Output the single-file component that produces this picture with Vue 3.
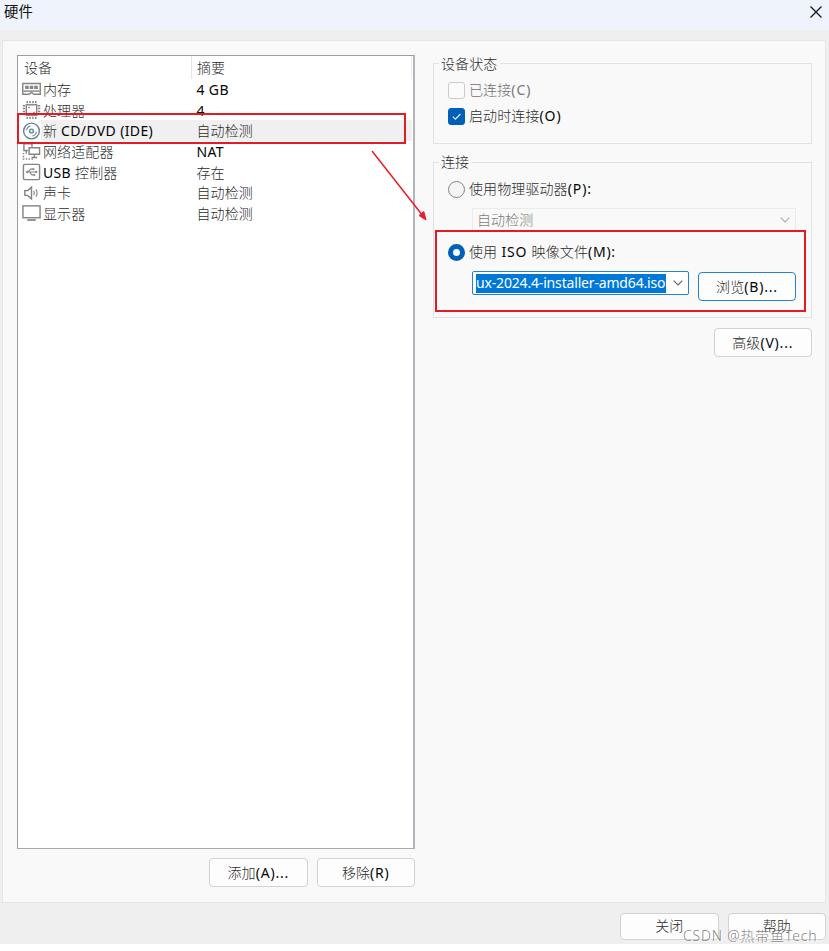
<script setup>
const devices = [
  { icon: 'memory', name: '内存', summary: '4 GB' },
  { icon: 'cpu', name: '处理器', summary: '4' },
  { icon: 'disc', name: '新 CD/DVD (IDE)', summary: '自动检测', selected: true },
  { icon: 'network', name: '网络适配器', summary: 'NAT' },
  { icon: 'usb', name: 'USB 控制器', summary: '存在' },
  { icon: 'sound', name: '声卡', summary: '自动检测' },
  { icon: 'display', name: '显示器', summary: '自动检测' },
]
// Splits a label so Latin runs can be drawn darker than Chinese ones
const runs = (text) =>
  text.match(/[\u4e00-\u9fff]+|[^\u4e00-\u9fff]+/g).map((t) => ({ t, latin: !/[\u4e00-\u9fff]/.test(t) }))
</script>

<template>
  <div class="dialog">
    <header class="titlebar">
      <span>硬件</span>
      <svg class="close" width="12" height="12" viewBox="0 0 12 12"><path d="M.5 .5L11.5 11.5M11.5 .5L.5 11.5" /></svg>
    </header>

    <main class="panel">
      <section class="left">
        <div class="list">
          <div class="head">
            <span class="col-device">设备</span>
            <span class="col-summary">摘要</span>
            <i class="head-end"></i>
          </div>
          <div v-for="d in devices" :key="d.icon" class="row">
            <svg class="icon" :class="d.icon" width="20" height="20" viewBox="0 0 20 20">
              <g v-if="d.icon === 'memory'">
                <path d="M.8 4.2H19.2V15.5H12.5L10 13.5L7.5 15.5H.8Z" />
                <path d="M1.5 12.2H18.5" />
                <path class="solid" d="M3.3 6.5h3.8v3.4H3.3zM8.1 6.5h3.8v3.4H8.1zM12.9 6.5h3.8v3.4h-3.8z" />
              </g>
              <g v-else-if="d.icon === 'cpu'">
                <rect x="4.5" y="4.5" width="11" height="11" />
                <path class="pins" d="M5.5 .5V3M8.5 .5V3M11.5 .5V3M14.5 .5V3M5.5 17V19.5M8.5 17V19.5M11.5 17V19.5M14.5 17V19.5M.8 5.5H3.2M.8 8.5H3.2M.8 11.5H3.2M.8 14.5H3.2M16.8 5.5H19.2M16.8 8.5H19.2M16.8 11.5H19.2M16.8 14.5H19.2" />
                <path class="solid" d="M6.5 6.5h1.7v1.7h-1.7zM11.8 11.8h1.7v1.7h-1.7z" />
              </g>
              <g v-else-if="d.icon === 'disc'">
                <circle cx="10" cy="10" r="8.3" />
                <circle cx="10" cy="10" r="2" />
                <path class="thin" d="M4.8 9.2A5.3 5.3 0 0 1 9 4.8M15.2 10.8A5.3 5.3 0 0 1 11 15.2" />
              </g>
              <g v-else-if="d.icon === 'network'">
                <path d="M2 2.5H10.5V5.5M2 2.5V9.5H6.5" />
                <path d="M7.5 6.5H18.5V13.5H7.5ZM13 13.5V16.5M10 16.8H16M4.5 10V12.5" />
                <path class="dots" d="M1.5 12V18.5H12" />
              </g>
              <g v-else-if="d.icon === 'usb'">
                <rect x="1.5" y="2" width="17" height="16" rx="1.5" />
                <path class="thin" d="M5 10H15M6.5 10L9 7H11.5M8 10L10.5 13H13" />
                <path class="solid" d="M3.8 10L6.3 8.2V11.8zM11 6h2v2h-2zM12 12h2v2h-2zM14 9h2v2h-2z" />
              </g>
              <g v-else-if="d.icon === 'sound'">
                <path d="M3 7.5H6L10 3.8V16.2L6 12.5H3Z" />
                <path class="thin" d="M12.3 7.8Q13.7 10 12.3 12.2M14.6 6Q17.2 10 14.6 14" />
              </g>
              <g v-else>
                <rect x="1" y="2.5" width="18" height="12.5" />
                <path class="stand" d="M5.5 17.4H14.5" />
              </g>
            </svg>
            <div class="cells" :class="{ selected: d.selected }">
              <span class="name"><span v-for="(r, i) in runs(d.name)" :key="i" :class="{ la: r.latin }">{{ r.t }}</span></span>
              <span class="value"><span v-for="(r, i) in runs(d.summary)" :key="i" :class="{ la: r.latin }">{{ r.t }}</span></span>
            </div>
          </div>
        </div>
        <div class="actions">
          <button class="btn">添加<span class="la">(A)...</span></button>
          <button class="btn">移除<span class="la">(R)</span></button>
        </div>
      </section>

      <section class="right">
        <div class="group state">
          <div class="legend">设备状态</div>
          <label class="option disabled"><span class="check"></span>已连接<span class="la dim">(C)</span></label>
          <label class="option">
            <span class="check on"><svg width="17" height="17" viewBox="0 0 17 17"><path d="M4.8 8.7L7.4 11.2L12.4 6" /></svg></span>
            启动时连接<span class="la">(O)</span>
          </label>
        </div>

        <div class="group connection">
          <div class="legend">连接</div>
          <label class="option"><span class="radio"></span>使用物理驱动器<span class="la">(P):</span></label>
          <div class="combo off">
            <span>自动检测</span>
            <svg width="10" height="6" viewBox="0 0 10 6"><path d="M.7 .7L5 5L9.3 .7" /></svg>
          </div>
          <label class="option iso"><span class="radio on"></span>使用<span class="la">&nbsp;ISO&nbsp;</span>映像文件<span class="la">(M):</span></label>
          <div class="browse">
            <div class="combo active">
              <span class="picked">ux-2024.4-installer-amd64.iso</span>
              <svg width="10" height="6" viewBox="0 0 10 6"><path d="M.7 .7L5 5L9.3 .7" /></svg>
            </div>
            <button class="btn focus">浏览<span class="la">(B)...</span></button>
          </div>
        </div>
        <button class="btn advanced">高级<span class="la">(V)...</span></button>
      </section>
    </main>

    <footer class="footer">
      <button class="btn">关闭</button>
      <button class="btn">帮助</button>
    </footer>

    <div class="mark mark-device"></div>
    <div class="mark mark-iso"></div>
    <svg class="arrow" width="60" height="76" viewBox="0 0 60 76">
      <path d="M3 3L54 68" /><path class="tip" d="M57 72L50 67.5L54.8 63.5Z" />
    </svg>
    <div class="watermark">CSDN @热带鱼Tech</div>
  </div>
</template>

<style>
body { margin: 0; background: #fff; overflow: hidden; }
</style>

<style scoped>
* { box-sizing: border-box; }
.dialog { position: relative; width: 829px; height: 944px; display: flex; flex-direction: column; background: #efefef; color: #2c2c2c; font: 300 14px/20px "Noto Sans", "Noto Sans CJK SC", sans-serif; letter-spacing: .1px; white-space: nowrap; }
.la { color: #050505; font-weight: 400; letter-spacing: .35px; }
.titlebar { height: 30px; flex: none; display: flex; justify-content: space-between; padding: 2px 7px 0 4px; background: #eff3fb; color: #111; font-size: 14.3px; font-weight: 400; }
.close { margin-top: 4px; }
.close path { stroke: #111; stroke-width: 1.2; fill: none; }
.panel { margin: 10px 3px 0 2px; height: 863px; flex: none; display: flex; gap: 18px; padding: 14px 13px 0 14px; background: #f9f9f9; border: 1px solid #e5e5e5; }
.left { width: 398px; flex: none; }
.list { height: 794px; background: #fff; border: 1px solid #9b9da5; border-right: 2px solid #b4b4bc; border-bottom-color: #a9a9b3; }
.head { height: 23px; display: flex; padding-left: 6px; align-items: center; }
.col-device { width: 168px; height: 23px; line-height: 23px; border-right: 1px solid #e5e5e5; }
.col-summary { flex: 1; padding-left: 5px; line-height: 23px; height: 23px; }
.head-end { width: 1px; height: 23px; background: #eee; margin-right: 1px; }
.row { height: 20.7px; display: flex; padding: 0 1px 0 4px; align-items: center; }
.icon { flex: none; width: 19px; }
.icon path, .icon rect, .icon circle { fill: none; stroke: #858585; stroke-width: 1.5; }
.icon .solid { fill: #858585; stroke: none; }
.icon .pins { stroke-width: 1.5; }
.icon .dots { stroke-dasharray: 1.5 1.5; }
.icon .stand { stroke-width: 1.8; }
.icon .thin { stroke-width: 1.2; }
.icon.disc circle, .icon.disc path { stroke: #64839d; }
.cells { flex: 1; height: 20.7px; display: flex; padding-left: 2px; line-height: 21.4px; }
.cells.selected { background: #f0f0f0; }
.name { width: 153.5px; }
.actions { display: flex; justify-content: flex-end; gap: 9px; margin-top: 9px; }
.btn { width: 98.5px; height: 29px; padding: 0; border: 1px solid #d2d2d2; border-radius: 4px; background: #fdfdfd; color: #2c2c2c; font: inherit; letter-spacing: inherit; }
.btn .la { letter-spacing: .8px; }
.right { width: 379.5px; display: flex; flex-direction: column; }
.group { border: 1px solid #e2e2e2; padding: 0 14px; }
.state { height: 81px; margin-top: 8px; }
.connection { height: 156px; margin-top: 18px; }
.legend { width: max-content; height: 20px; margin: -10px 0 0 -9px; padding: 0 3px 0 2px; background: #f9f9f9; }
.connection .legend { margin-top: -11px; }
.option { height: 20px; display: flex; align-items: center; }
.option .la { letter-spacing: .9px; }
.option.disabled { color: #707070; margin: 6px 0 6px; }
.option .la.dim { color: #777; }
.check { width: 17px; height: 17px; margin-right: 4px; border: 1px solid #ccc; border-radius: 3px; background: #fbfbfb; }
.check.on { background: #005fb8; border-color: #005fb8; }
.check svg { display: block; margin: -1px; }
.check path { fill: none; stroke: #e8f2ff; stroke-width: 1.1; }
.radio { width: 17px; height: 17px; margin-right: 4px; border: 1px solid #858585; border-radius: 50%; background: #f4f4f4; }
.radio.on { border: 5px solid #005fb8; background: #fff; }
.connection .legend + .option { margin-top: 7px; }
.combo { display: flex; align-items: center; justify-content: space-between; margin-left: 24px; }
.combo path { fill: none; stroke: #606060; stroke-width: 1.1; }
.combo.off { width: 324px; height: 24px; margin-top: 9px; padding: 0 5px 0 4px; border: 1px solid #ebebeb; color: #7c7c7c; }
.combo.off path { stroke: #aaa; }
.option.iso { margin-top: 10px; }
.option.iso .la { letter-spacing: .75px; }
.browse { display: flex; gap: 9px; margin-top: 9px; }
.combo.active { width: 217px; height: 24px; padding: 0 5px 0 3px; border: 1px solid #2382cf; border-radius: 2px; background: #fff; }
.picked { width: 190px; height: 19px; line-height: 18px; background: #0078d7; color: #fff; font-weight: 400; letter-spacing: -.17px; }
.btn.focus { width: 98px; border-color: #2382cf; margin-top: 1px; }
.advanced { margin-top: 10px; align-self: flex-end; }
.footer { display: flex; justify-content: flex-end; gap: 9px; padding: 10px 3px 0 0; }
.footer .btn { height: 27px; line-height: 18px; padding-bottom: 1px; }
.mark { position: absolute; border: 2px solid #e31b23; }
.mark-device { left: 17px; top: 113px; width: 389px; height: 31px; }
.mark-iso { left: 435px; top: 230px; width: 371px; height: 82px; }
.arrow { position: absolute; left: 369px; top: 148px; }
.arrow path { fill: none; stroke: #e51e2a; stroke-width: 1.5; }
.arrow .tip { fill: #e51e2a; stroke-width: 1; }
.watermark { position: absolute; left: 683px; top: 926px; font-size: 14px; letter-spacing: .82px; line-height: 20px; color: rgba(125, 125, 125, .95); text-shadow: 1px 1px 0 rgba(255, 255, 255, .7); }
</style>
